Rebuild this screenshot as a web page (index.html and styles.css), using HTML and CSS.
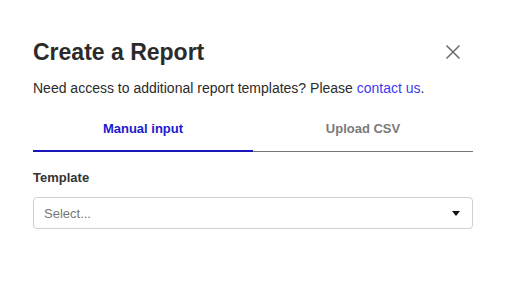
FILE: index.html
```html
<!DOCTYPE html>
<html>
<head>
<meta charset="utf-8">
<link rel="stylesheet" href="styles.css">
</head>
<body>
<div class="dialog">
  <div class="header">
    <h1 class="title">Create a Report</h1>
    <button class="close" aria-label="Close">
      <svg width="16" height="16" viewBox="0 0 16 16"><path d="M1.5 1.5L14.5 14.5M14.5 1.5L1.5 14.5" stroke="#6b6b6b" stroke-width="1.5" fill="none"/></svg>
    </button>
  </div>
  <p class="intro">Need access to additional report templates? Please <a class="link" href="#">contact us</a>.</p>
  <div class="tabs">
    <div class="tab active">Manual input</div>
    <div class="tab">Upload CSV</div>
  </div>
  <div class="field">
    <div class="label">Template</div>
    <div class="select">
      <span class="placeholder">Select...</span>
      <svg class="caret" width="8" height="5" viewBox="0 0 8 5"><path d="M0 0H8L4 5Z" fill="#111"/></svg>
    </div>
  </div>
</div>
</body>
</html>
```
FILE: styles.css
```css
html, body {
  margin: 0;
  padding: 0;
  background: #fff;
}
body {
  font-family: "Liberation Sans", Arial, sans-serif;
  color: #2b2b2b;
}
.dialog {
  width: 440px;
  padding: 35px 37px 0 33px;
}
.header {
  display: flex;
  justify-content: space-between;
  align-items: center;
}
.title {
  margin: 0;
  font-size: 23px;
  font-weight: 700;
  line-height: 34px;
  color: #2b2b2b;
}
.close {
  border: 0;
  background: none;
  padding: 0;
  margin-right: 12px;
  width: 16px;
  height: 16px;
  display: flex;
}
.intro {
  margin: 9px 0 0;
  font-size: 14px;
  line-height: 20px;
  color: #2b2b2b;
}
.link {
  color: #3b3bf0;
  text-decoration: none;
}
.tabs {
  display: flex;
  margin-top: 16px;
  border-bottom: 1px solid #777;
}
.tab {
  flex: 1;
  text-align: center;
  font-size: 13px;
  font-weight: 700;
  color: #7a7a7a;
  padding: 7px 0 14px;
  margin-bottom: -1px;
  border-bottom: 2px solid transparent;
}
.tab.active {
  color: #1a1ad0;
  border-bottom-color: #1818b8;
}
.field {
  margin-top: 18px;
}
.label {
  font-size: 13px;
  font-weight: 700;
  color: #333;
  line-height: 16px;
}
.select {
  margin-top: 11px;
  height: 30px;
  border: 1px solid #d0d0d0;
  border-radius: 4px;
  display: flex;
  align-items: center;
  justify-content: space-between;
  padding: 0 12px 0 10px;
}
.placeholder {
  font-size: 13px;
  color: #777;
}
.caret {
  display: block;
}
```
